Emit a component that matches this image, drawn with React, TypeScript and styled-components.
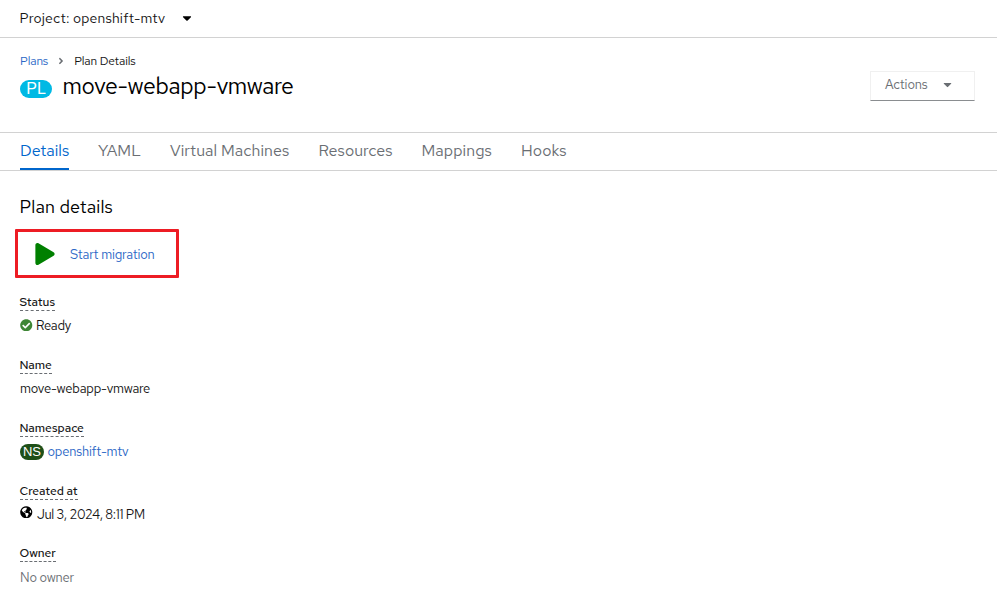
import React from "react";
import styled, { createGlobalStyle } from "styled-components";
import { FaAngleRight, FaCaretDown, FaCheckCircle, FaGlobeAmericas, FaPlay } from "react-icons/fa";

const GlobalStyle = createGlobalStyle`
  *, *::before, *::after { box-sizing: border-box; }
  body {
    margin: 0;
    background: #fff;
    color: #151515;
    font-family: "Red Hat Text", Inter, "Noto Sans", sans-serif;
    font-size: 13px;
    font-weight: 400;
  }
  a { color: #2b67c6; text-decoration: none; }
  h1, h2, dl, dd, dt, ul { margin: 0; padding: 0; }
  svg { display: block; flex: none; }
`;

const Page = styled.div`
  height: 609px;
  overflow: hidden;
`;

const ProjectBar = styled.div`
  display: flex;
  align-items: center;
  gap: 15px;
  height: 38px;
  padding: 0 0 1px 19.5px;
  border-bottom: 1px solid #d2d2d2;
  font-size: 14px;
`;

const Label = styled.span<{ $spacing?: number }>`
  white-space: nowrap;
  letter-spacing: ${({ $spacing = 0 }) => $spacing}px;
`;

const PageHeader = styled.header`
  display: flex;
  justify-content: space-between;
  height: 94px;
  padding: 15px 22px 0 20px;
`;

const Breadcrumb = styled.nav`
  display: flex;
  align-items: center;
  height: 16px;
  font-size: 12px;

  svg { margin: 0 8px; color: #6a6e73; }
`;

const TitleRow = styled.div`
  display: flex;
  align-items: center;
  gap: 10.5px;
  height: 35px;
`;

const Title = styled.h1`
  margin-top: -2px;
  font-size: 23px;
  line-height: 30px;
  font-weight: 400;
  letter-spacing: -0.37px;
  color: #000;
`;

const KindBadge = styled.span<{ $large?: boolean }>`
  display: inline-flex;
  align-items: center;
  justify-content: center;
  width: ${({ $large }) => ($large ? 32 : 24)}px;
  height: ${({ $large }) => ($large ? 18 : 16)}px;
  margin-top: ${({ $large }) => ($large ? 5 : 1)}px;
  border-radius: 10px;
  background: ${({ $large }) => ($large ? "#00b9e4" : "#1e4f18")};
  color: #fff;
  font-family: "Liberation Sans", Arial, sans-serif;
  font-size: ${({ $large }) => ($large ? 16 : 13)}px;
  line-height: 16px;
  font-weight: 400;
`;

const ActionsButton = styled.button`
  display: flex;
  align-items: center;
  gap: 13px;
  width: 105px;
  height: 30px;
  margin-top: 18px;
  padding: 0 0 3px 14px;
  border: 1px solid #f0f0f0;
  border-bottom-color: #8a8d90;
  background: #fff;
  color: #6a6e73;
  font: inherit;
`;

const Tabs = styled.nav`
  display: flex;
  gap: 29px;
  height: 39px;
  padding-left: 20px;
  border-top: 1px solid #d2d2d2;
  border-bottom: 1px solid #d2d2d2;
`;

const Tab = styled.a<{ $width: number; $spacing: number; $active?: boolean }>`
  width: ${({ $width }) => $width}px;
  height: 37px;
  border-bottom: 2px solid ${({ $active }) => ($active ? "#06c" : "transparent")};
  color: ${({ $active }) => ($active ? "#06c" : "#6a6e73")};
  font-size: 16px;
  line-height: 35px;
  letter-spacing: ${({ $spacing }) => $spacing}px;
  white-space: nowrap;
`;

const Content = styled.main`
  padding: 24px 0 0 20px;
`;

const SectionTitle = styled.h2`
  height: 24px;
  margin-left: -0.5px;
  font-size: 18px;
  line-height: 24px;
  font-weight: 400;
  letter-spacing: 0.1px;
  color: #000;
`;

const StartMigration = styled.button`
  display: flex;
  align-items: center;
  gap: 14.5px;
  width: 164px;
  height: 49px;
  margin: 10px 0 0 -5.5px;
  padding: 1px 0 0 16px;
  border: 3px solid #ed1c24;
  border-radius: 1px;
  background: #fff;
  color: #2b67c6;
  font: inherit;

  svg { margin-top: -1px; }
`;

const Details = styled.dl`
  display: grid;
  grid-template-rows: 63px 63px 63px 62px 63px;
  margin-top: 16px;
`;

const Term = styled.dt`
  width: fit-content;
  height: 17px;
  margin-left: -0.5px;
  border-bottom: 1px dashed #6a6e73;
  font-size: 12px;
  line-height: 16px;
  font-weight: 500;
  letter-spacing: -0.03px;
  color: #151515;
`;

const Value = styled.dd<{ $gap?: number; $muted?: boolean; $top?: number }>`
  display: flex;
  align-items: center;
  gap: ${({ $gap = 0 }) => $gap}px;
  height: 20px;
  margin-top: ${({ $top = 4 }) => $top}px;
  color: ${({ $muted }) => ($muted ? "#6a6e73" : "#151515")};
`;

const GlobeIcon = styled(FaGlobeAmericas)`
  margin-top: -4px;
  color: #000;
`;

const tabs = [
  { name: "Details", width: 49, spacing: 0 },
  { name: "YAML", width: 43, spacing: 0.1 },
  { name: "Virtual Machines", width: 119.5, spacing: 0.09 },
  { name: "Resources", width: 74, spacing: 0.04 },
  { name: "Mappings", width: 70.5, spacing: 0.1 },
  { name: "Hooks", width: 46, spacing: 0.1 },
];

export default function App() {
  return (
    <Page>
      <GlobalStyle />
      <ProjectBar>
        <Label $spacing={0.17}>Project: openshift-mtv</Label>
        <FaCaretDown size={14} color="#000" />
      </ProjectBar>
      <PageHeader>
        <div>
          <Breadcrumb>
            <a href="#plans"><Label $spacing={-0.15}>Plans</Label></a>
            <FaAngleRight size={10} />
            <Label $spacing={-0.15}>Plan Details</Label>
          </Breadcrumb>
          <TitleRow>
            <KindBadge $large>PL</KindBadge>
            <Title>move-webapp-vmware</Title>
          </TitleRow>
        </div>
        <ActionsButton>
          <Label $spacing={-0.12}>Actions</Label>
          <FaCaretDown size={13} />
        </ActionsButton>
      </PageHeader>
      <Tabs>
        {tabs.map((tab, index) => (
          <Tab key={tab.name} href="#" $width={tab.width} $spacing={tab.spacing} $active={index === 0}>
            {tab.name}
          </Tab>
        ))}
      </Tabs>
      <Content>
        <SectionTitle>Plan details</SectionTitle>
        <StartMigration>
          <FaPlay size={22} color="#008000" />
          <Label $spacing={-0.17}>Start migration</Label>
        </StartMigration>
        <Details>
          <div>
            <Term>Status</Term>
            <Value $gap={3.5}><FaCheckCircle size={12.5} color="#3e8635" /><Label $spacing={-0.2}>Ready</Label></Value>
          </div>
          <div>
            <Term>Name</Term>
            <Value><Label $spacing={-0.24}>move-webapp-vmware</Label></Value>
          </div>
          <div>
            <Term>Namespace</Term>
            <Value $gap={3.5}><KindBadge>NS</KindBadge><a href="#ns"><Label $spacing={-0.2}>openshift-mtv</Label></a></Value>
          </div>
          <div>
            <Term>Created at</Term>
            <Value $gap={4.5}><GlobeIcon size={12.5} /><Label $spacing={-0.32}>Jul 3, 2024, 8:11 PM</Label></Value>
          </div>
          <div>
            <Term>Owner</Term>
            <Value $muted $top={5}><Label $spacing={-0.22}>No owner</Label></Value>
          </div>
        </Details>
      </Content>
    </Page>
  );
}
